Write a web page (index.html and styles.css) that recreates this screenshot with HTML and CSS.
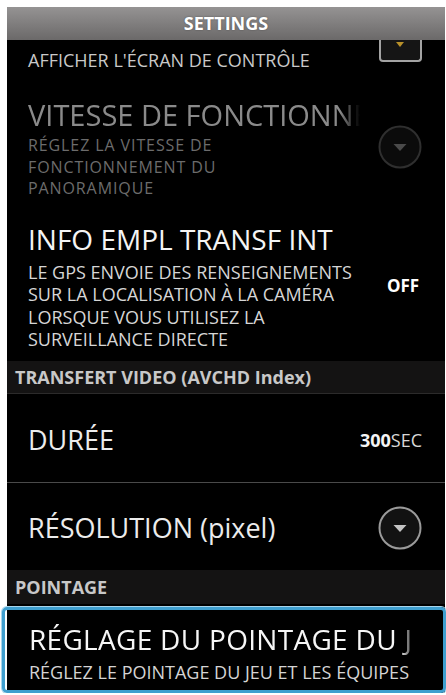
FILE: index.html
```html
<!DOCTYPE html>
<html lang="fr">
<head>
<meta charset="utf-8">
<title>Settings</title>
<link rel="stylesheet" href="styles.css">
</head>
<body>
<div class="panel">
  <div class="header">SETTINGS</div>

  <div class="item item-compact">
    <div class="text">
      <div class="label-sm">AFFICHER L'ÉCRAN DE CONTRÔLE</div>
    </div>
    <div class="control control-top">
      <div class="tab"><span class="tab-arrow"></span></div>
    </div>
  </div>

  <div class="item item-speed disabled">
    <div class="text">
      <div class="title fade">VITESSE DE FONCTIONNEMENT</div>
      <div class="desc desc-tight">
        <div>RÉGLEZ LA VITESSE DE</div>
        <div>FONCTIONNEMENT DU</div>
        <div>PANORAMIQUE</div>
      </div>
    </div>
    <div class="control">
      <svg class="dropdown dim" width="44" height="44" viewBox="0 0 44 44"><circle cx="22" cy="22" r="20.5" fill="#0b0b0b" stroke="#2f2f2f" stroke-width="2"/><path d="M15.5 19 L28.5 19 L22 26 Z" fill="#4a4a4a"/></svg>
    </div>
  </div>

  <div class="item item-gps">
    <div class="text">
      <div class="title">INFO EMPL TRANSF INT</div>
      <div class="desc desc-loose">
        <div>LE GPS ENVOIE DES RENSEIGNEMENTS</div>
        <div>SUR LA LOCALISATION À LA CAMÉRA</div>
        <div>LORSQUE VOUS UTILISEZ LA</div>
        <div>SURVEILLANCE DIRECTE</div>
      </div>
    </div>
    <div class="control"><span class="value-bold">OFF</span></div>
  </div>

  <div class="section">TRANSFERT VIDEO (AVCHD Index)</div>

  <div class="item item-single item-duration">
    <div class="text"><div class="title">DURÉE</div></div>
    <div class="control control-value"><span class="value"><b>300</b>SEC</span></div>
  </div>

  <div class="item item-single item-resolution">
    <div class="text"><div class="title">RÉSOLUTION (pixel)</div></div>
    <div class="control">
      <svg class="dropdown" width="44" height="44" viewBox="0 0 44 44"><circle cx="22" cy="22" r="20.5" fill="#121212" stroke="#9a9a9a" stroke-width="2"/><path d="M15.5 19 L28.5 19 L22 26 Z" fill="#c4c4c4"/></svg>
    </div>
  </div>

  <div class="section section-last">POINTAGE</div>

  <div class="item item-selected">
    <div class="text">
      <div class="title fade fade-short">RÉGLAGE DU POINTAGE DU JEU</div>
      <div class="desc">RÉGLEZ LE POINTAGE DU JEU ET LES ÉQUIPES</div>
    </div>
  </div>
</div>
</body>
</html>
```

FILE: styles.css
```css
html, body {
  margin: 0;
  padding: 0;
  background: #ffffff;
  overflow: hidden;
}

body {
  font-family: "Open Sans", "DejaVu Sans", sans-serif;
}

.panel {
  width: 438px;
  margin: 7px 0 0 7px;
  background: #000000;
  display: flex;
  flex-direction: column;
}

.header {
  height: 33px;
  line-height: 33px;
  text-align: center;
  color: #ffffff;
  font-weight: 700;
  font-size: 18px;
  background: linear-gradient(#959393, #6b6969);
  text-shadow: 0 0 2px rgba(0, 0, 0, 0.35);
}

.item {
  display: flex;
  align-items: center;
  padding-left: 21px;
  padding-right: 15px;
  color: #eeeeee;
}

.text {
  flex: 1;
  min-width: 0;
}

.control {
  width: 60px;
  flex: none;
  display: flex;
  justify-content: center;
  align-items: center;
}

.control-value {
  width: 80px;
  justify-content: flex-end;
  padding-right: 8px;
}

.title {
  font-size: 28px;
  line-height: 38px;
  white-space: nowrap;
}

.fade {
  overflow: hidden;
  -webkit-mask-image: linear-gradient(to right, #000 calc(100% - 20px), transparent);
  mask-image: linear-gradient(to right, #000 calc(100% - 20px), transparent);
}

.desc {
  font-size: 18px;
  color: #cfcfcf;
  white-space: nowrap;
}

/* row: afficher */
.item-compact {
  height: 40px;
  align-items: stretch;
}

.item-compact .text {
  display: flex;
  align-items: center;
}

.label-sm {
  font-size: 18px;
  color: #c9c9c9;
  white-space: nowrap;
}

.control-top {
  align-items: flex-start;
}

.tab {
  width: 39px;
  height: 20px;
  border: 2px solid #a3a3a3;
  border-top: none;
  border-radius: 0 0 4px 4px;
  background: #151515;
  display: flex;
  justify-content: center;
}

.tab-arrow {
  width: 0;
  height: 0;
  margin-top: 2px;
  border-left: 4px solid transparent;
  border-right: 4px solid transparent;
  border-top: 5px solid #b8902a;
}

/* row: vitesse */
.item-speed {
  padding-top: 15px;
  padding-bottom: 6px;
}

.item-speed .text {
  margin-right: 10px;
}

.item-speed .title {
  font-size: 29px;
  line-height: 40px;
}

.disabled .title {
  color: #8a8a8a;
}

.disabled .desc {
  color: #6c6c6c;
}

.desc-tight {
  font-size: 16px;
  letter-spacing: 0.9px;
  line-height: 21.5px;
}

/* row: gps */
.item-gps {
  padding-top: 14px;
  padding-bottom: 10px;
}

.item-gps .title {
  color: #f4f4f4;
}

.desc-loose {
  line-height: 22.5px;
  margin-top: 3px;
  color: #d6d6d6;
}

.value-bold {
  font-weight: 700;
  font-size: 17px;
  color: #ffffff;
  margin-left: 6px;
}

.value {
  font-size: 18px;
  color: #d8d8d8;
}

.value b {
  font-weight: 700;
  color: #f4f4f4;
}

/* section headers */
.section {
  height: 32px;
  line-height: 32px;
  padding-left: 8px;
  background: #141313;
  border-bottom: 1px solid #2c2b2b;
  color: #c8c8c8;
  font-weight: 700;
  font-size: 18px;
}

.section-last {
  height: 34px;
  line-height: 34px;
  border-bottom: none;
}

/* single-line rows */
.item-single .title {
  font-size: 27px;
  color: #ececec;
}

.item-duration {
  height: 89px;
  border-bottom: 1px solid #4a4a4a;
  padding-top: 4px;
  box-sizing: border-box;
}

.item-resolution {
  height: 87px;
  padding-top: 4px;
  box-sizing: border-box;
}

/* selected row */
.item-selected {
  margin: 3px -1px 0 -5px;
  border: 3px solid #3f9fcf;
  border-radius: 5px;
  box-shadow: 0 0 0 1px #a9d5eb;
  padding: 10px 29px 6px 24px;
  height: 86px;
  box-sizing: border-box;
}

.item-selected .title {
  color: #f6f6f6;
  letter-spacing: 0.3px;
}

.fade-short {
  -webkit-mask-image: linear-gradient(to right, #000 calc(100% - 14px), rgba(0, 0, 0, 0.35) calc(100% - 3px), transparent);
  mask-image: linear-gradient(to right, #000 calc(100% - 14px), rgba(0, 0, 0, 0.35) calc(100% - 3px), transparent);
}

.item-selected .desc {
  line-height: 24px;
  margin-top: 2px;
  color: #d4d4d4;
}
```
